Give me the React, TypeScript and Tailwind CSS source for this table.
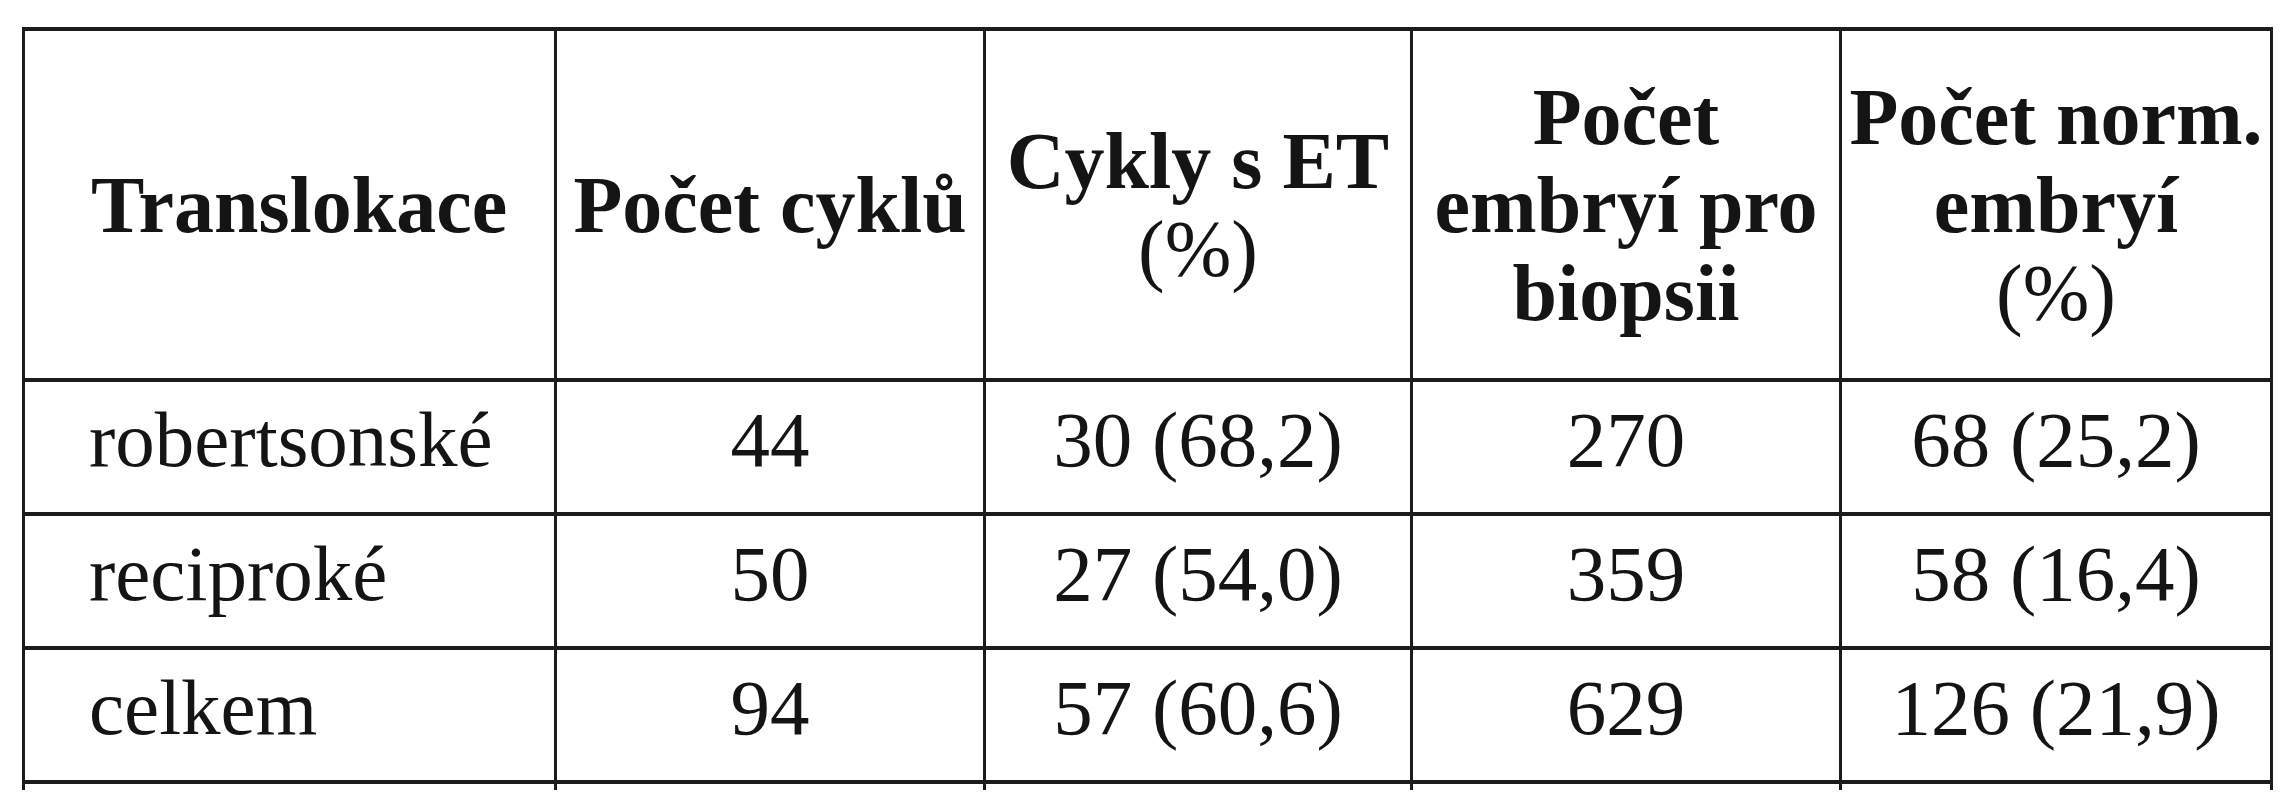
const rows = [
  { name: "robertsonské", cycles: "44", et: "30 (68,2)", embryos: "270", normal: "68 (25,2)" },
  { name: "reciproké", cycles: "50", et: "27 (54,0)", embryos: "359", normal: "58 (16,4)" },
  { name: "celkem", cycles: "94", et: "57 (60,6)", embryos: "629", normal: "126 (21,9)" },
];

export default function App() {
  return (
    <div className="w-[2283px] h-[800px] bg-white pl-[22px] pt-[27px] text-[#141414] font-['Liberation_Serif',serif]">
      <table className="table-fixed border-collapse w-[2248px]">
        <colgroup>
          <col className="w-[532px]" />
          <col className="w-[429px]" />
          <col className="w-[427px]" />
          <col className="w-[429px]" />
          <col className="w-[431px]" />
        </colgroup>
        <thead>
          <tr className="h-[351px] text-[80px] leading-[88px] font-bold">
            <th className="border-[4px] border-x-[3px] border-[#1c1c1c] text-left pl-[66px] whitespace-nowrap">Translokace</th>
            <th className="border-[4px] border-x-[3px] border-[#1c1c1c] text-center whitespace-nowrap">Počet cyklů</th>
            <th className="border-[4px] border-x-[3px] border-[#1c1c1c] text-center whitespace-nowrap">
              Cykly s ET
              <br />
              <span className="font-normal">(%)</span>
            </th>
            <th className="border-[4px] border-x-[3px] border-[#1c1c1c] text-center whitespace-nowrap">
              Počet
              <br />
              embryí pro
              <br />
              biopsii
            </th>
            <th className="border-[4px] border-x-[3px] border-[#1c1c1c] text-center whitespace-nowrap">
              Počet norm.
              <br />
              embryí
              <br />
              <span className="font-normal">(%)</span>
            </th>
          </tr>
        </thead>
        <tbody className="text-[79px] leading-[88px]">
          {rows.map(r => (
            <tr key={r.name} className="h-[134px]">
              <td className="border-[4px] border-x-[3px] border-[#1c1c1c] pl-[64px] pb-[14px] whitespace-nowrap">{r.name}</td>
              <td className="border-[4px] border-x-[3px] border-[#1c1c1c] text-center pb-[14px]">{r.cycles}</td>
              <td className="border-[4px] border-x-[3px] border-[#1c1c1c] text-center pb-[14px] whitespace-nowrap">{r.et}</td>
              <td className="border-[4px] border-x-[3px] border-[#1c1c1c] text-center pb-[14px]">{r.embryos}</td>
              <td className="border-[4px] border-x-[3px] border-[#1c1c1c] text-center pb-[14px] whitespace-nowrap">{r.normal}</td>
            </tr>
          ))}
          <tr className="h-[8px]">
            <td className="border-x-[3px] border-[#1c1c1c] p-0" />
            <td className="border-x-[3px] border-[#1c1c1c] p-0" />
            <td className="border-x-[3px] border-[#1c1c1c] p-0" />
            <td className="border-x-[3px] border-[#1c1c1c] p-0" />
            <td className="border-x-[3px] border-[#1c1c1c] p-0" />
          </tr>
        </tbody>
      </table>
    </div>
  );
}
